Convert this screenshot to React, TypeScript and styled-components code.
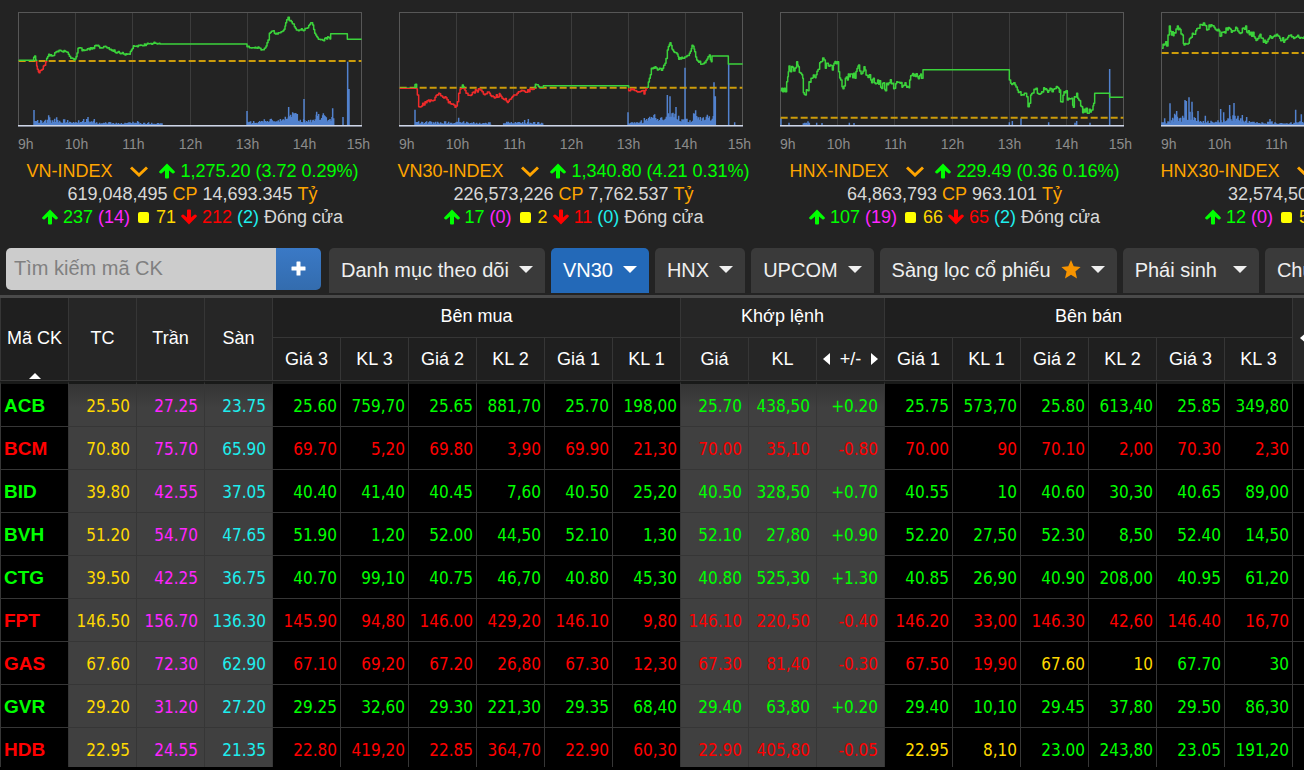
import React from 'react';
import styled, { createGlobalStyle, css } from 'styled-components';

const GlobalStyle = createGlobalStyle`
  * { box-sizing: border-box; }
  html, body, #root { height: 100%; margin: 0; }
  body { background: #000; overflow: hidden; }
  button, input { font-family: inherit; margin: 0; }
`;

const colors = {
  up: '#00ff00',
  down: '#ff0000',
  ref: '#ffd900',
  ceil: '#ff25ff',
  floor: '#1eeeee',
  orange: '#ffa500',
  line: '#363636',
};

type Tone = 'up' | 'down' | 'ref' | 'ceil' | 'floor' | 'orange';

/* ---------- layout ---------- */

const Page = styled.div`
  display: flex;
  flex-direction: column;
  height: 100%;
  overflow: hidden;
  background: #232323;
  color: #d8d8d8;
  font: 18px/22px 'Liberation Sans', Arial, sans-serif;
`;

const Indices = styled.section`
  display: flex;
  flex: none;
  padding: 12px 0 0 2px;
  overflow: hidden;
`;

const Panel = styled.article`
  flex: 0 0 381px;
  display: flex;
  flex-direction: column;
`;

const ChartBox = styled.div`
  margin: 0 12px 0 16px;
`;

const ChartSvg = styled.svg`
  display: block;
  width: 345px;
  height: 115px;
`;

const Hours = styled.div`
  display: flex;
  margin-top: 9px;
  font-size: 14px;
  line-height: 16px;
  color: #8c8c8c;
`;

const Hour = styled.span`
  flex: 0 0 57px;
  text-align: center;
  &:first-child { flex-basis: 30px; text-align: left; }
  &:last-child { flex-basis: 37px; text-align: right; }
`;

const Stats = styled.div`
  display: flex;
  flex-direction: column;
  gap: 1px;
  margin-top: 8px;
`;

const StatLine = styled.div`
  display: flex;
  justify-content: center;
  align-items: center;
  gap: 5px;
  white-space: nowrap;
`;

const Toned = styled.span<{ $tone: Tone }>`
  color: ${(p) => colors[p.$tone]};
`;

const PickButton = styled.button`
  display: flex;
  align-items: center;
  justify-content: center;
  width: 30px;
  height: 16px;
  margin-left: 7px;
  padding: 0;
  border: 0;
  background: none;
  color: ${colors.orange};
`;

const Square = styled.span`
  width: 11px;
  height: 11px;
  margin: 0 2px 0 3px;
  border-radius: 2px;
  background: #ffff00;
`;

/* ---------- toolbar ---------- */

const Toolbar = styled.nav`
  display: flex;
  flex: none;
  gap: 6px;
  height: 50px;
  margin-top: 20px;
  padding: 0 0 2px 6px;
  border-bottom: 3px solid #4a4a4a;
  overflow: hidden;
  font-size: 20px;
  line-height: 24px;
`;

const Search = styled.form`
  display: flex;
  flex: 0 0 315px;
  min-width: 0;
  height: 42px;
  margin-right: 2px;
`;

const SearchInput = styled.input`
  flex: 1;
  min-width: 0;
  padding: 0 8px 2px;
  border: 0;
  border-radius: 5px 0 0 5px;
  background: #cccccc;
  color: #333;
  font-size: 20px;
  &::placeholder { color: #808080; opacity: 1; }
`;

const AddButton = styled.button`
  display: flex;
  align-items: center;
  justify-content: center;
  width: 45px;
  padding: 0 0 2px;
  border: 0;
  border-radius: 0 5px 5px 0;
  background: linear-gradient(#3a79c6, #336cae);
  color: #fff;
`;

const Tab = styled.button<{ $active?: boolean; $wide?: boolean }>`
  display: flex;
  flex: none;
  align-items: center;
  gap: ${(p) => (p.$wide ? 16 : 10)}px;
  height: 45px;
  padding: 0 12px 2px;
  border: 0;
  border-radius: 5px 5px 0 0;
  background: ${(p) => (p.$active ? '#2369b8' : '#3a3a3a')};
  color: ${(p) => (p.$active ? '#fff' : '#efefef')};
  font-size: 20px;
  line-height: 24px;
  white-space: nowrap;
`;

const Caret = styled.span`
  border: 7px solid transparent;
  border-top-color: currentColor;
  border-bottom: 0;
`;

/* ---------- board ---------- */

const Board = styled.main`
  flex: 1;
  min-height: 0;
  border-bottom: 3px solid #000;
  overflow: hidden;
  background: #000;
`;

const Table = styled.table`
  table-layout: fixed;
  width: 1496px;
  border-collapse: separate;
  border-spacing: 0;
`;

const Th = styled.th<{ $light?: boolean; $group?: boolean }>`
  position: relative;
  height: ${(p) => (p.$group ? 40 : 43)}px;
  padding: ${(p) => (p.$group || p.rowSpan === 2 ? '0 0 3px' : 0)};
  border-left: 1px solid ${colors.line};
  border-bottom: 1px solid ${colors.line};
  background: ${(p) => (p.$light ? '#262626' : '#1f1f1f')};
  color: #fff;
  font-weight: 400;
  text-align: center;
  white-space: nowrap;
`;

const SortMark = styled.span`
  position: absolute;
  left: 28px;
  bottom: 1px;
  border: 6px solid transparent;
  border-bottom-color: #fff;
  border-top: 0;
`;

const Pager = styled.div`
  display: flex;
  align-items: center;
  justify-content: space-between;
  padding: 0 6px;
`;

const PageButton = styled.button<{ $dir: 'left' | 'right' }>`
  width: 0;
  padding: 0;
  border: 6px solid transparent;
  background: none;
  ${(p) =>
    p.$dir === 'left'
      ? css`border-right: 7px solid #fff; border-left: 0;`
      : css`border-left: 7px solid #fff; border-right: 0;`}
`;

const LastHead = styled.div`
  display: flex;
  padding-left: 7px;
`;

const Row = styled.tr`
  &:first-child > * { border-top: 3px solid #191a19; height: 46px; }
`;

const Cell = styled.td<{ $tone?: Tone; $shade?: boolean }>`
  height: 43px;
  padding: 2px ${(p) => (p.$shade ? 6 : 3)}px 0 0;
  border-left: 1px solid ${colors.line};
  border-bottom: 1px solid ${colors.line};
  background: ${(p) => (p.$shade ? '#404040' : '#000')};
  color: ${(p) => (p.$tone ? colors[p.$tone] : '#fff')};
  font: 17px/22px 'DejaVu Sans Condensed', 'Noto Sans', sans-serif;
  text-align: right;
  white-space: nowrap;
  ${Row}:first-child > & {
    ${(p) => p.$shade && css`background: linear-gradient(#343434, #404040 24px);`}
  }
`;

const Symbol = styled.th<{ $tone: Tone }>`
  height: 43px;
  padding: 2px 0 0 3px;
  border-left: 1px solid ${colors.line};
  border-bottom: 1px solid ${colors.line};
  background: #000;
  color: ${(p) => colors[p.$tone]};
  font-size: 19px;
  font-weight: 700;
  text-align: left;
`;

/* ---------- icons ---------- */

const Arrow = ({ tone }: { tone: 'up' | 'down' }) => (
  <svg width="16" height="16" viewBox="0 0 16 16" fill={colors[tone]} aria-hidden="true">
    <path
      transform={tone === 'down' ? 'rotate(180 8 8)' : undefined}
      d="M8 0.5L15.6 8.2Q16.2 9 15.5 9.7L14.8 10.3Q14 10.8 13.3 10.2L10 7.4V14.5Q10 15.5 9 15.5H7Q6 15.5 6 14.5V7.4L2.7 10.2Q2 10.8 1.2 10.3L0.5 9.7Q-0.2 9 0.4 8.2Z"
    />
  </svg>
);

const Chevron = () => (
  <svg width="18" height="11" viewBox="0 0 18 11" fill="none" stroke="currentColor" strokeWidth="3" aria-hidden="true">
    <path d="M1 1.5L9 9L17 1.5" />
  </svg>
);

const Plus = () => (
  <svg width="15" height="15" viewBox="0 0 15 15" fill="currentColor" aria-hidden="true">
    <path d="M6 0.5H9Q9.5 0.5 9.5 1V5.5H14Q14.5 5.5 14.5 6V9Q14.5 9.5 14 9.5H9.5V14Q9.5 14.5 9 14.5H6Q5.5 14.5 5.5 14V9.5H1Q0.5 9.5 0.5 9V6Q0.5 5.5 1 5.5H5.5V1Q5.5 0.5 6 0.5Z" />
  </svg>
);

const Star = () => (
  <svg width="20" height="19" viewBox="0 0 20 19" fill="#f79400" aria-hidden="true">
    <path d="M10 0L12.7 6.3L19.6 7L14.4 11.5L16 18.4L10 14.8L4 18.4L5.6 11.5L0.4 7L7.3 6.3Z" />
  </svg>
);

/* ---------- charts ---------- */

type Pt = [number, number];

interface IndexData {
  name: string;
  value: string;
  volume: string;
  amount: string;
  ups: string;
  ceils: string;
  refs: string;
  downs: string;
  floors: string;
  left: number;
  base: number;
  jitter: number;
  line: Pt[];
  bars: Pt[];
  spikes: Pt[];
}

const noise = (seed: number) => {
  let s = seed;
  return () => {
    s = (s * 16807) % 2147483647;
    return s / 2147483647;
  };
};

/* Adds stepped, tick-sized movement between the anchors, leaving flat stretches flat. */
const pricePath = (pts: Pt[], jitter: number) => {
  const rnd = noise(7919);
  let d = '';
  pts.forEach(([x, y], i) => {
    d += d ? `H${x}V${y}` : `M${x} ${y}`;
    const next = pts[i + 1];
    if (!next || next[1] === y) return;
    for (let k = x + 3; k < next[0] - 1; k += 3) {
      const t = (k - x) / (next[0] - x);
      d += `H${k}V${(y + (next[1] - y) * t + (rnd() - 0.5) * jitter).toFixed(1)}`;
    }
  });
  return d;
};

const volumePath = (pts: Pt[], spikes: Pt[]) => {
  const rnd = noise(104729);
  let d = '';
  pts.forEach(([x, h], i) => {
    const next = pts[i + 1];
    if (!next || (h === 0 && next[1] === 0)) return;
    for (let k = x; k < next[0]; k += 3) {
      const t = (k - x) / (next[0] - x);
      const r = rnd();
      const v = (h + (next[1] - h) * t) * (0.45 + r * r * 0.8);
      if (v > 1) d += `M${k} 376V${(375 - v).toFixed(0)}`;
    }
  });
  spikes.forEach(([x, h]) => {
    d += `M${x} 376V${375 - h}`;
  });
  return d;
};

const Chart = ({ data, id }: { data: IndexData; id: string }) => {
  const { left: l, base } = data;
  return (
    <ChartSvg viewBox={`${l} 36 1035 345`} role="img" aria-label={data.name}>
      <defs>
        <linearGradient id={id} gradientUnits="userSpaceOnUse" x1="0" y1="0" x2="0" y2="400">
          <stop offset={base / 400} stopColor="#3bd23b" />
          <stop offset={base / 400} stopColor="#f02a2a" />
        </linearGradient>
      </defs>
      <g stroke="#3c3c3c" strokeWidth="3" shapeRendering="crispEdges">
        {[171, 342, 516, 687, 858].map((x) => (
          <line key={x} x1={l + x + 1.5} x2={l + x + 1.5} y1="36" y2="378" />
        ))}
        <path d={`M${l + 1.5} 378V37.5H${l + 1030.5}V378`} fill="none" stroke="#575757" />
      </g>
      <path d={volumePath(data.bars, data.spikes)} stroke="#5b93ec" strokeOpacity="0.85" strokeWidth="4.5" />
      <line x1={l + 2} x2={l + 1030} y1={base} y2={base} stroke="#cc9c0a" strokeWidth="6" strokeDasharray="21 9" />
      <path
        d={pricePath(data.line, data.jitter)}
        fill="none"
        stroke={`url(#${id})`}
        strokeWidth="4.5"
        strokeLinejoin="round"
      />
      <g shapeRendering="crispEdges" strokeWidth="3">
        <line x1={l} x2={l + 1032} y1="376.5" y2="376.5" stroke="#cfd6e6" />
        <line x1={l} x2={l + 1032} y1="379.5" y2="379.5" stroke="#808592" />
      </g>
    </ChartSvg>
  );
};

const indices: IndexData[] = [
  {
    name: 'VN-INDEX', value: '1,275.20 (3.72 0.29%)', volume: '619,048,495', amount: '14,693.345',
    ups: '237', ceils: '(14)', refs: '71', downs: '212', floors: '(2)',
    left: 54, base: 183, jitter: 7,
    line: [[56, 181], [98, 181], [104, 168], [107, 181], [112, 208], [117, 218], [124, 210], [130, 198], [137, 185], [140, 175], [146, 163], [158, 167], [168, 155], [180, 151], [195, 154], [205, 163], [212, 175], [222, 180], [228, 170], [234, 145], [242, 144], [246, 152], [262, 146], [275, 147], [290, 137], [302, 143], [315, 139], [325, 143], [336, 150], [352, 157], [372, 162], [388, 163], [394, 150], [400, 137], [412, 140], [430, 137], [442, 130], [455, 133], [462, 127], [480, 132], [740, 132], [741, 140], [748, 143], [765, 142], [790, 149], [798, 138], [804, 120], [808, 100], [820, 92], [826, 102], [840, 98], [852, 88], [857, 68], [864, 52], [868, 62], [880, 72], [886, 85], [895, 92], [904, 86], [912, 91], [920, 85], [932, 68], [938, 75], [944, 100], [955, 118], [968, 121], [985, 112], [990, 117], [992, 101], [1040, 101], [1042, 118], [1085, 118]],
    bars: [[104, 12], [140, 14], [146, 24], [152, 14], [170, 20], [182, 14], [230, 12], [266, 18], [290, 9], [340, 7], [375, 7], [410, 11], [425, 6], [486, 7], [488, 0], [740, 0], [743, 16], [752, 9], [790, 14], [820, 24], [850, 20], [866, 48], [880, 34], [892, 28], [905, 14], [940, 18], [950, 36], [970, 30], [990, 20], [998, 40], [1004, 30]],
    spikes: [[102, 45], [264, 24], [283, 18], [741, 42], [866, 54], [887, 36], [912, 78], [998, 50], [1029, 24], [1043, 190], [1047, 108]],
  },
  {
    name: 'VN30-INDEX', value: '1,340.80 (4.21 0.31%)', volume: '226,573,226', amount: '7,762.537',
    ups: '17', ceils: '(0)', refs: '2', downs: '11', floors: '(0)',
    left: 57, base: 263, jitter: 10,
    line: [[59, 265], [102, 265], [107, 253], [110, 266], [112, 285], [116, 320], [125, 318], [135, 305], [145, 300], [155, 302], [165, 292], [176, 280], [185, 288], [195, 290], [205, 308], [215, 313], [225, 322], [232, 305], [236, 280], [240, 268], [247, 255], [252, 266], [258, 280], [268, 286], [280, 276], [300, 270], [310, 282], [325, 276], [340, 290], [360, 285], [370, 298], [385, 304], [395, 292], [405, 285], [415, 275], [440, 277], [450, 266], [460, 268], [463, 262], [466, 253], [480, 262], [490, 257], [744, 257], [746, 272], [760, 268], [775, 275], [785, 272], [792, 282], [798, 265], [802, 262], [808, 235], [814, 205], [825, 200], [832, 210], [848, 205], [855, 190], [862, 150], [870, 128], [878, 150], [888, 158], [896, 178], [905, 172], [918, 170], [928, 160], [936, 136], [944, 155], [950, 180], [964, 193], [975, 188], [988, 165], [994, 185], [996, 168], [1044, 168], [1045, 192], [1088, 192]],
    bars: [[107, 9], [225, 9], [236, 20], [245, 10], [330, 7], [335, 0], [370, 0], [371, 6], [385, 12], [410, 9], [488, 7], [490, 0], [742, 0], [745, 9], [790, 12], [800, 28], [850, 26], [862, 60], [870, 46], [890, 40], [900, 16], [935, 16], [947, 40], [955, 26], [1000, 28], [1004, 34]],
    spikes: [[105, 46], [434, 15], [445, 18], [744, 38], [822, 30], [862, 90], [870, 86], [888, 54], [915, 172], [947, 44], [1002, 128], [1006, 86], [1046, 183], [1064, 8]],
  },
  {
    name: 'HNX-INDEX', value: '229.49 (0.36 0.16%)', volume: '64,863,793', amount: '963.101',
    ups: '107', ceils: '(19)', refs: '66', downs: '65', floors: '(2)',
    left: 60, base: 353, jitter: 20,
    line: [[62, 272], [68, 275], [72, 265], [76, 275], [80, 245], [85, 215], [87, 198], [92, 215], [98, 202], [105, 205], [110, 185], [115, 200], [122, 220], [128, 235], [130, 278], [145, 272], [147, 245], [155, 235], [160, 225], [168, 224], [176, 208], [182, 185], [192, 180], [196, 205], [202, 190], [210, 195], [217, 210], [222, 190], [232, 185], [236, 215], [242, 240], [246, 260], [252, 258], [256, 235], [268, 230], [275, 222], [285, 235], [296, 195], [303, 222], [312, 200], [318, 225], [328, 224], [332, 240], [340, 235], [350, 250], [358, 242], [362, 262], [368, 250], [376, 272], [380, 250], [388, 248], [398, 250], [404, 265], [410, 245], [420, 250], [428, 258], [435, 248], [440, 262], [447, 263], [449, 240], [460, 228], [472, 230], [482, 222], [484, 235], [488, 235], [489, 209], [747, 209], [748, 240], [752, 250], [765, 255], [772, 270], [780, 275], [790, 285], [797, 280], [804, 320], [808, 310], [812, 285], [822, 268], [828, 265], [832, 280], [845, 275], [860, 270], [870, 265], [880, 268], [895, 265], [900, 270], [902, 305], [906, 306], [912, 275], [918, 272], [922, 300], [935, 295], [940, 322], [943, 290], [950, 280], [956, 300], [962, 318], [968, 338], [978, 325], [982, 340], [988, 328], [996, 330], [1001, 310], [1004, 280], [1048, 280], [1049, 292], [1090, 292]],
    bars: [[130, 5], [150, 6]],
    spikes: [[63, 20], [87, 7], [134, 7], [144, 11], [170, 7], [186, 6], [268, 7], [282, 6], [748, 8], [757, 12], [783, 20], [866, 8], [945, 7], [950, 12], [990, 7], [1049, 168]],
  },
  {
    name: 'HNX30-INDEX', value: '486.07 (1.28 0.26%)', volume: '32,574,500', amount: '628.417',
    ups: '12', ceils: '(0)', refs: '5', downs: '13', floors: '(0)',
    left: 171, base: 159, jitter: 16,
    line: [[174, 145], [180, 135], [185, 125], [188, 138], [192, 105], [196, 78], [202, 105], [210, 98], [220, 78], [225, 85], [235, 105], [240, 135], [250, 132], [258, 115], [265, 100], [275, 92], [285, 85], [292, 74], [302, 76], [308, 90], [315, 75], [330, 82], [342, 88], [350, 108], [360, 95], [370, 90], [385, 92], [395, 82], [405, 98], [415, 85], [425, 78], [430, 98], [440, 97], [450, 110], [458, 120], [465, 108], [475, 115], [485, 130], [492, 118], [500, 110], [515, 108], [530, 122], [545, 118], [560, 105], [575, 112], [600, 110], [860, 110], [880, 125], [1000, 140], [1200, 140]],
    bars: [[174, 8], [200, 10], [208, 22], [220, 26], [230, 20], [243, 30], [265, 34], [280, 24], [300, 10], [345, 14], [375, 26], [395, 26], [430, 14], [450, 10], [485, 6], [498, 10], [510, 8], [570, 6], [576, 12], [592, 12], [604, 8]],
    spikes: [[182, 20], [198, 65], [212, 34], [218, 42], [243, 75], [247, 72], [255, 83], [264, 70], [282, 42], [304, 28], [350, 48], [359, 38], [377, 60], [390, 66], [402, 28], [415, 30], [428, 24], [498, 18], [575, 46], [592, 32]],
  },
];

const IndexPanel = ({ data, id }: { data: IndexData; id: string }) => (
  <Panel>
    <ChartBox>
      <Chart data={data} id={id} />
      <Hours>
        {['9h', '10h', '11h', '12h', '13h', '14h', '15h'].map((h) => <Hour key={h}>{h}</Hour>)}
      </Hours>
    </ChartBox>
    <Stats>
      <StatLine>
        <Toned $tone="orange">{data.name}</Toned>
        <PickButton type="button" aria-label={`Chọn chỉ số ${data.name}`}><Chevron /></PickButton>
        <Arrow tone="up" />
        <Toned $tone="up">{data.value}</Toned>
      </StatLine>
      <StatLine>
        <span>{data.volume}</span>
        <Toned $tone="orange">CP</Toned>
        <span>{data.amount}</span>
        <Toned $tone="orange">Tỷ</Toned>
      </StatLine>
      <StatLine>
        <Arrow tone="up" />
        <Toned $tone="up">{data.ups}</Toned>
        <Toned $tone="ceil">{data.ceils}</Toned>
        <Square />
        <Toned $tone="ref">{data.refs}</Toned>
        <Arrow tone="down" />
        <Toned $tone="down">{data.downs}</Toned>
        <Toned $tone="floor">{data.floors}</Toned>
        <span>Đóng cửa</span>
      </StatLine>
    </Stats>
  </Panel>
);

/* ---------- board data ---------- */

interface Stock {
  sym: string;
  tone: Tone;
  ref: string[];
  buy: string[];
  match: string[];
  sell: string[];
  sellTones?: Tone[];
}

const w = (s: string) => s.split(' ');

const stocks: Stock[] = [
  { sym: 'ACB', tone: 'up', ref: w('25.50 27.25 23.75'), buy: w('25.60 759,70 25.65 881,70 25.70 198,00'), match: w('25.70 438,50 +0.20'), sell: w('25.75 573,70 25.80 613,40 25.85 349,80') },
  { sym: 'BCM', tone: 'down', ref: w('70.80 75.70 65.90'), buy: w('69.70 5,20 69.80 3,90 69.90 21,30'), match: w('70.00 35,10 -0.80'), sell: w('70.00 90 70.10 2,00 70.30 2,30') },
  { sym: 'BID', tone: 'up', ref: w('39.80 42.55 37.05'), buy: w('40.40 41,40 40.45 7,60 40.50 25,20'), match: w('40.50 328,50 +0.70'), sell: w('40.55 10 40.60 30,30 40.65 89,00') },
  { sym: 'BVH', tone: 'up', ref: w('51.20 54.70 47.65'), buy: w('51.90 1,20 52.00 44,50 52.10 1,30'), match: w('52.10 27,80 +0.90'), sell: w('52.20 27,50 52.30 8,50 52.40 14,50') },
  { sym: 'CTG', tone: 'up', ref: w('39.50 42.25 36.75'), buy: w('40.70 99,10 40.75 46,70 40.80 45,30'), match: w('40.80 525,30 +1.30'), sell: w('40.85 26,90 40.90 208,00 40.95 61,20') },
  { sym: 'FPT', tone: 'down', ref: w('146.50 156.70 136.30'), buy: w('145.90 94,80 146.00 429,20 146.10 9,80'), match: w('146.10 220,50 -0.40'), sell: w('146.20 33,00 146.30 42,60 146.40 16,70') },
  { sym: 'GAS', tone: 'down', ref: w('67.60 72.30 62.90'), buy: w('67.10 69,20 67.20 26,80 67.30 12,30'), match: w('67.30 81,40 -0.30'), sell: w('67.50 19,90 67.60 10 67.70 30'), sellTones: ['down', 'ref', 'up'] },
  { sym: 'GVR', tone: 'up', ref: w('29.20 31.20 27.20'), buy: w('29.25 32,60 29.30 221,30 29.35 68,40'), match: w('29.40 63,80 +0.20'), sell: w('29.40 10,10 29.45 37,80 29.50 86,30') },
  { sym: 'HDB', tone: 'down', ref: w('22.95 24.55 21.35'), buy: w('22.80 419,20 22.85 364,70 22.90 60,30'), match: w('22.90 405,80 -0.05'), sell: w('22.95 8,10 23.00 243,80 23.05 191,20'), sellTones: ['ref', 'up', 'up'] },
];

const refTones: Tone[] = ['ref', 'ceil', 'floor'];

export default function App() {
  return (
    <Page>
      <GlobalStyle />
      <Indices>
        {indices.map((d, i) => <IndexPanel key={d.name} data={d} id={`price-${i}`} />)}
      </Indices>
      <Toolbar>
        <Search onSubmit={(e) => e.preventDefault()}>
          <SearchInput type="text" placeholder="Tìm kiếm mã CK" aria-label="Tìm kiếm mã CK" />
          <AddButton type="submit" aria-label="Thêm mã"><Plus /></AddButton>
        </Search>
        <Tab type="button">Danh mục theo dõi<Caret /></Tab>
        <Tab type="button" $active>VN30<Caret /></Tab>
        <Tab type="button">HNX<Caret /></Tab>
        <Tab type="button">UPCOM<Caret /></Tab>
        <Tab type="button">Sàng lọc cổ phiếu<Star /><Caret /></Tab>
        <Tab type="button" $wide>Phái sinh<Caret /></Tab>
        <Tab type="button">Chứng quyền<Caret /></Tab>
      </Toolbar>
      <Board>
        <Table>
          <thead>
            <tr>
              <Th rowSpan={2}>Mã CK<SortMark /></Th>
              <Th rowSpan={2} $light>TC</Th>
              <Th rowSpan={2} $light>Trần</Th>
              <Th rowSpan={2} $light>Sàn</Th>
              <Th colSpan={6} $group>Bên mua</Th>
              <Th colSpan={3} $group $light>Khớp lệnh</Th>
              <Th colSpan={6} $group>Bên bán</Th>
              <Th rowSpan={2} $light>
                <LastHead><PageButton type="button" $dir="left" aria-label="Cột trước" /></LastHead>
              </Th>
              <Th rowSpan={2} $light aria-hidden="true" />
              <Th rowSpan={2} $light aria-hidden="true" />
            </tr>
            <tr>
              {['Giá 3', 'KL 3', 'Giá 2', 'KL 2', 'Giá 1', 'KL 1'].map((t) => <Th key={t}>{t}</Th>)}
              <Th $light>Giá</Th>
              <Th $light>KL</Th>
              <Th $light>
                <Pager>
                  <PageButton type="button" $dir="left" aria-label="Trước" />
                  <span>+/-</span>
                  <PageButton type="button" $dir="right" aria-label="Sau" />
                </Pager>
              </Th>
              {['Giá 1', 'KL 1', 'Giá 2', 'KL 2', 'Giá 3', 'KL 3'].map((t) => <Th key={t}>{t}</Th>)}
            </tr>
          </thead>
          <tbody>
            {stocks.map((s) => (
              <Row key={s.sym}>
                <Symbol scope="row" $tone={s.tone}>{s.sym}</Symbol>
                {s.ref.map((v, i) => <Cell key={i} $shade $tone={refTones[i]}>{v}</Cell>)}
                {s.buy.map((v, i) => <Cell key={i} $tone={s.tone}>{v}</Cell>)}
                {s.match.map((v, i) => <Cell key={i} $shade $tone={s.tone}>{v}</Cell>)}
                {s.sell.map((v, i) => (
                  <Cell key={i} $tone={s.sellTones ? s.sellTones[Math.floor(i / 2)] : s.tone}>{v}</Cell>
                ))}
                <Cell />
                <Cell />
                <Cell />
              </Row>
            ))}
          </tbody>
        </Table>
      </Board>
    </Page>
  );
}
